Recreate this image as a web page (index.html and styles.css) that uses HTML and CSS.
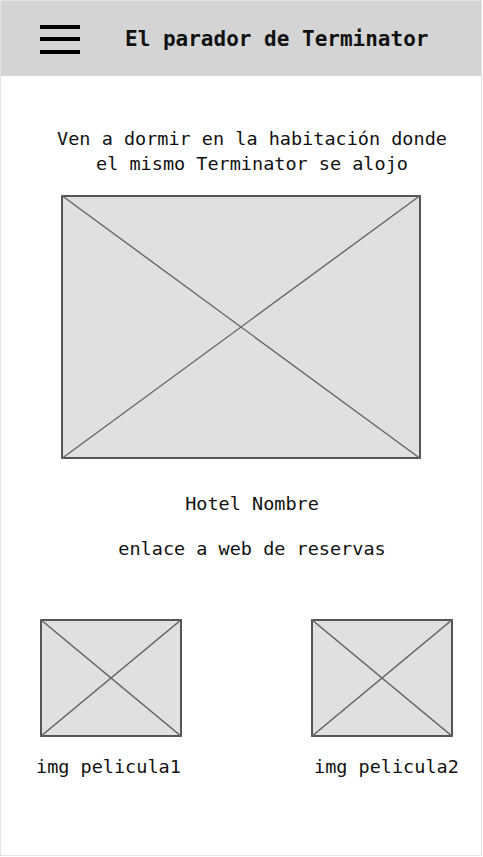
FILE: index.html
```html
<!DOCTYPE html>
<html lang="es">
<head>
  <meta charset="UTF-8">
  <title>El parador de Terminator</title>
  <link rel="stylesheet" href="styles.css">
</head>
<body>
  <div class="frame">
    <header class="topbar">
      <svg class="burger" width="40" height="30" viewBox="0 0 40 30">
        <rect x="0" y="1" width="40" height="4" fill="#000"/>
        <rect x="0" y="13" width="40" height="4" fill="#000"/>
        <rect x="0" y="26" width="40" height="4" fill="#000"/>
      </svg>
      <h1 class="title">El parador de Terminator</h1>
    </header>

    <p class="intro">Ven a dormir en la habitación donde<br>el mismo Terminator se alojo</p>

    <svg class="placeholder big" viewBox="0 0 100 100" preserveAspectRatio="none">
      <rect x="0" y="0" width="100" height="100" fill="#e0e0e0" stroke="#555" stroke-width="4" vector-effect="non-scaling-stroke"/>
      <line x1="0" y1="0" x2="100" y2="100" stroke="#666" stroke-width="1.4" vector-effect="non-scaling-stroke"/>
      <line x1="100" y1="0" x2="0" y2="100" stroke="#666" stroke-width="1.4" vector-effect="non-scaling-stroke"/>
    </svg>

    <p class="hotel">Hotel Nombre</p>
    <p class="booking">enlace a web de reservas</p>

    <div class="movies">
      <div class="movie movie-one">
        <svg class="placeholder small" viewBox="0 0 100 100" preserveAspectRatio="none">
          <rect x="0" y="0" width="100" height="100" fill="#e0e0e0" stroke="#555" stroke-width="4" vector-effect="non-scaling-stroke"/>
          <line x1="0" y1="0" x2="100" y2="100" stroke="#666" stroke-width="1.4" vector-effect="non-scaling-stroke"/>
          <line x1="100" y1="0" x2="0" y2="100" stroke="#666" stroke-width="1.4" vector-effect="non-scaling-stroke"/>
        </svg>
        <span class="caption">img pelicula1</span>
      </div>
      <div class="movie movie-two">
        <svg class="placeholder small" viewBox="0 0 100 100" preserveAspectRatio="none">
          <rect x="0" y="0" width="100" height="100" fill="#e0e0e0" stroke="#555" stroke-width="4" vector-effect="non-scaling-stroke"/>
          <line x1="0" y1="0" x2="100" y2="100" stroke="#666" stroke-width="1.4" vector-effect="non-scaling-stroke"/>
          <line x1="100" y1="0" x2="0" y2="100" stroke="#666" stroke-width="1.4" vector-effect="non-scaling-stroke"/>
        </svg>
        <span class="caption">img pelicula2</span>
      </div>
    </div>
  </div>
</body>
</html>
```

FILE: styles.css
```css
* {
  box-sizing: border-box;
}

body {
  margin: 0;
  background-color: #ffffff;
  font-family: 'DejaVu Sans Mono', 'Liberation Mono', monospace;
  color: #111;
}

.frame {
  width: 482px;
  height: 856px;
  border: 1px solid #e4e4e4;
  display: flex;
  flex-direction: column;
}

.topbar {
  height: 75px;
  background-color: #d4d4d4;
  display: flex;
  align-items: center;
  padding-left: 39px;
  gap: 45px;
}

.burger {
  display: block;
  flex-shrink: 0;
}

.title {
  margin: 0;
  font-size: 21px;
  font-weight: bold;
  color: #111;
}

.intro,
.hotel,
.booking {
  margin: 0;
  font-size: 18.5px;
  line-height: 25px;
  text-align: center;
  padding-left: 22px;
}

.intro {
  margin-top: 50px;
}

.placeholder {
  display: block;
}

.placeholder.big {
  width: 360px;
  height: 264px;
  margin: 19px 0 0 60px;
}

.hotel {
  margin-top: 32px;
}

.booking {
  margin-top: 20px;
}

.movies {
  display: flex;
  gap: 129px;
  padding-left: 35px;
  margin-top: 58px;
}

.movie {
  display: flex;
  flex-direction: column;
  align-items: flex-start;
}

.placeholder.small {
  width: 142px;
  height: 118px;
}

.movie-one .placeholder {
  margin-left: 4px;
}

.movie-two .caption {
  margin-left: 3px;
}

.caption {
  margin-top: 17px;
  font-size: 18.5px;
  line-height: 25px;
  white-space: nowrap;
}
```
